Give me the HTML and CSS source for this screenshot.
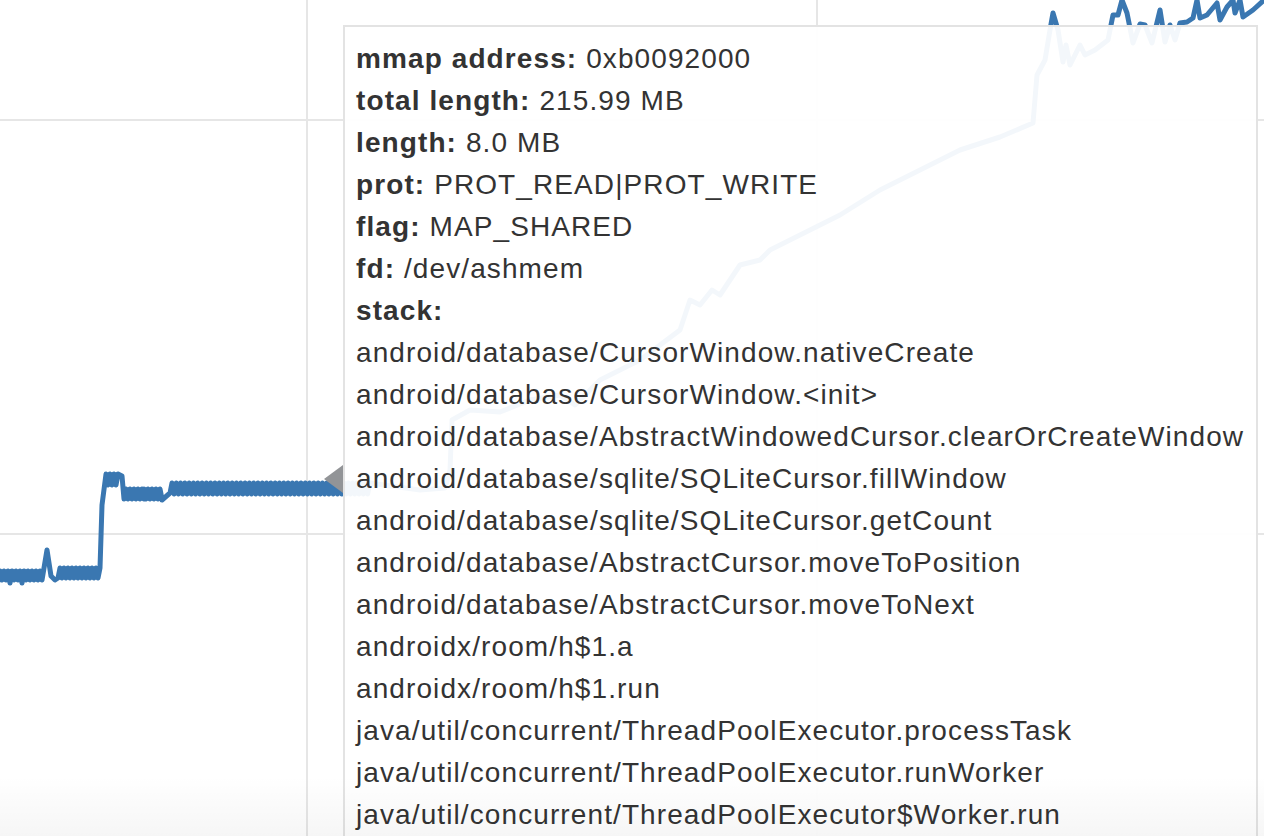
FILE: index.html
```html
<!DOCTYPE html>
<html>
<head>
<meta charset="utf-8">
<link rel="stylesheet" href="styles.css">
</head>
<body>
<div class="chart">
  <svg class="plot" width="1264" height="836" viewBox="0 0 1264 836">
    <g class="grid">
      <line x1="307" y1="0" x2="307" y2="836"/>
      <line x1="817" y1="0" x2="817" y2="836"/>
      <line x1="0" y1="120" x2="1264" y2="120"/>
      <line x1="0" y1="534" x2="1264" y2="534"/>
    </g>
    <path class="series" d="M0,571 l2,9 l2,-9 l2,9 l2,-9 l2,12 l2,-12 l2,9 l2,-9 l2,9 l2,-9 l2,12 l2,-12 l2,9 l2,-9 l2,9 l2,-9 l2,9 l2,-9 l2,9 l2,-9 l2,9 L47,550 L51,576 L55,580 L58,578 L60,568 l2,10 l2,-10 l2,10 l2,-10 l2,10 l2,-10 l2,10 l2,-10 l2,10 l2,-10 l2,10 l2,-10 l2,10 l2,-10 l2,10 l2,-10 l2,10 l2,-10 l2,10 l2,-10 L102,505 L106,474 l2,11 l2,-11 l2,11 l2,-11 l2,11 l2,-11 L122,476 L124,499 l2,-10 l2,10 l2,-10 l2,10 l2,-10 l2,10 l2,-10 l2,10 l2,-10 l2,10 L144,489 l2,10 l2,-10 l2,10 l2,-10 l2,10 l2,-10 l2,10 l2,-10 l2,10 L162,500 L170,493 L172,483 l2.15,11 l2.15,-11 l2.15,11 l2.15,-11 l2.15,11 l2.15,-11 l2.15,11 l2.15,-11 l2.15,11 l2.15,-11 l2.15,11 l2.15,-11 l2.15,11 l2.15,-11 l2.15,11 l2.15,-11 l2.15,11 l2.15,-11 l2.15,11 l2.15,-11 l2.15,11 l2.15,-11 l2.15,11 l2.15,-11 l2.15,11 l2.15,-11 l2.15,11 l2.15,-11 l2.15,11 l2.15,-11 l2.15,11 l2.15,-11 l2.15,11 l2.15,-11 l2.15,11 l2.15,-11 l2.15,11 l2.15,-11 l2.15,11 l2.15,-11 l2.15,11 l2.15,-11 l2.15,11 l2.15,-11 l2.15,11 l2.15,-11 l2.15,11 l2.15,-11 l2.15,11 l2.15,-11 l2.15,11 l2.15,-11 l2.15,11 l2.15,-11 l2.15,11 l2.15,-11 l2.15,11 l2.15,-11 l2.15,11 l2.15,-11 l2.15,11 l2.15,-11 l2.15,11 l2.15,-11 l2.15,11 l2.15,-11 l2.15,11 l2.15,-11 l2.15,11 l2.15,-11 l2.15,11 l2.15,-11 l2.15,11 l2.15,-11 l2.15,11 l2.15,-11 l2.15,11 l2.15,-11 l2.15,11 l2.15,-11 l2.15,11 l2.15,-11 l2.15,11 l2.15,-11 l2.15,11 l2.15,-11 l2.15,11 l2.15,-11 l2.15,11 l2.15,-11 l2.15,11 l2.15,-11 L420,490 L445,488 L450,470 L452,420 L470,410 L500,412 L530,400 L560,395 L575,405 L600,380 L640,360 L660,345 L680,330 L690,300 L700,305 L712,290 L720,295 L740,265 L760,260 L770,250 L800,235 L840,215 L880,190 L900,180 L920,170 L960,150 L1000,137 L1033,123 L1037,75 L1045,60 L1050,30 L1053,13 L1058,30 L1063,62 L1066,45 L1070,65 L1080,45 L1085,55 L1095,50 L1108,40 L1113,15 L1118,15 L1122,0 L1127,13 L1133,43 L1140,24 L1145,25 L1152,43 L1160,10 L1165,42 L1170,25 L1175,40 L1180,23 L1187,22 L1193,18 L1197,0 L1200,18 L1207,15 L1217,3 L1220,20 L1227,7 L1233,0 L1235,13 L1240,0 L1243,17 L1253,10 L1264,0"/>
  </svg>

  <div class="tooltip">
    <div class="row"><b>mmap address:</b> 0xb0092000</div>
    <div class="row"><b>total length:</b> 215.99 MB</div>
    <div class="row"><b>length:</b> 8.0 MB</div>
    <div class="row"><b>prot:</b> PROT_READ|PROT_WRITE</div>
    <div class="row"><b>flag:</b> MAP_SHARED</div>
    <div class="row"><b>fd:</b> /dev/ashmem</div>
    <div class="row"><b>stack:</b></div>
    <div class="row">android/database/CursorWindow.nativeCreate</div>
    <div class="row">android/database/CursorWindow.&lt;init&gt;</div>
    <div class="row">android/database/AbstractWindowedCursor.clearOrCreateWindow</div>
    <div class="row">android/database/sqlite/SQLiteCursor.fillWindow</div>
    <div class="row">android/database/sqlite/SQLiteCursor.getCount</div>
    <div class="row">android/database/AbstractCursor.moveToPosition</div>
    <div class="row">android/database/AbstractCursor.moveToNext</div>
    <div class="row">androidx/room/h$1.a</div>
    <div class="row">androidx/room/h$1.run</div>
    <div class="row">java/util/concurrent/ThreadPoolExecutor.processTask</div>
    <div class="row">java/util/concurrent/ThreadPoolExecutor.runWorker</div>
    <div class="row">java/util/concurrent/ThreadPoolExecutor$Worker.run</div>
  </div>

  <div class="fade"></div>
</div>
</body>
</html>
```

FILE: styles.css
```css
html, body {
  margin: 0;
  padding: 0;
  background: #ffffff;
  overflow: hidden;
}

.chart {
  position: relative;
  width: 1264px;
  height: 836px;
  overflow: hidden;
}

.plot {
  display: block;
}

.grid line {
  stroke: #e6e6e6;
  stroke-width: 2;
}

.series {
  fill: none;
  stroke: #3a77b1;
  stroke-width: 5;
  stroke-linejoin: round;
  stroke-linecap: round;
}

.tooltip {
  position: absolute;
  left: 343px;
  top: 25px;
  width: 915px;
  height: 830px;
  box-sizing: border-box;
  padding: 11px 11px;
  background: rgba(255, 255, 255, 0.94);
  border: 2px solid #e3e3e3;
  font-family: "Liberation Sans", Arial, sans-serif;
  font-size: 28px;
  letter-spacing: 1.1px;
  line-height: 42px;
  color: #333333;
  white-space: nowrap;
}

.tooltip::before {
  content: "";
  position: absolute;
  left: -21px;
  top: 438px;
  width: 0;
  height: 0;
  border-top: 14px solid transparent;
  border-bottom: 14px solid transparent;
  border-right: 19px solid #929497;
}

.row b {
  font-weight: bold;
}

.fade {
  position: absolute;
  left: 0;
  right: 0;
  bottom: 0;
  height: 60px;
  background: linear-gradient(to bottom, rgba(0, 0, 0, 0), rgba(0, 0, 0, 0.035));
  pointer-events: none;
}
```
